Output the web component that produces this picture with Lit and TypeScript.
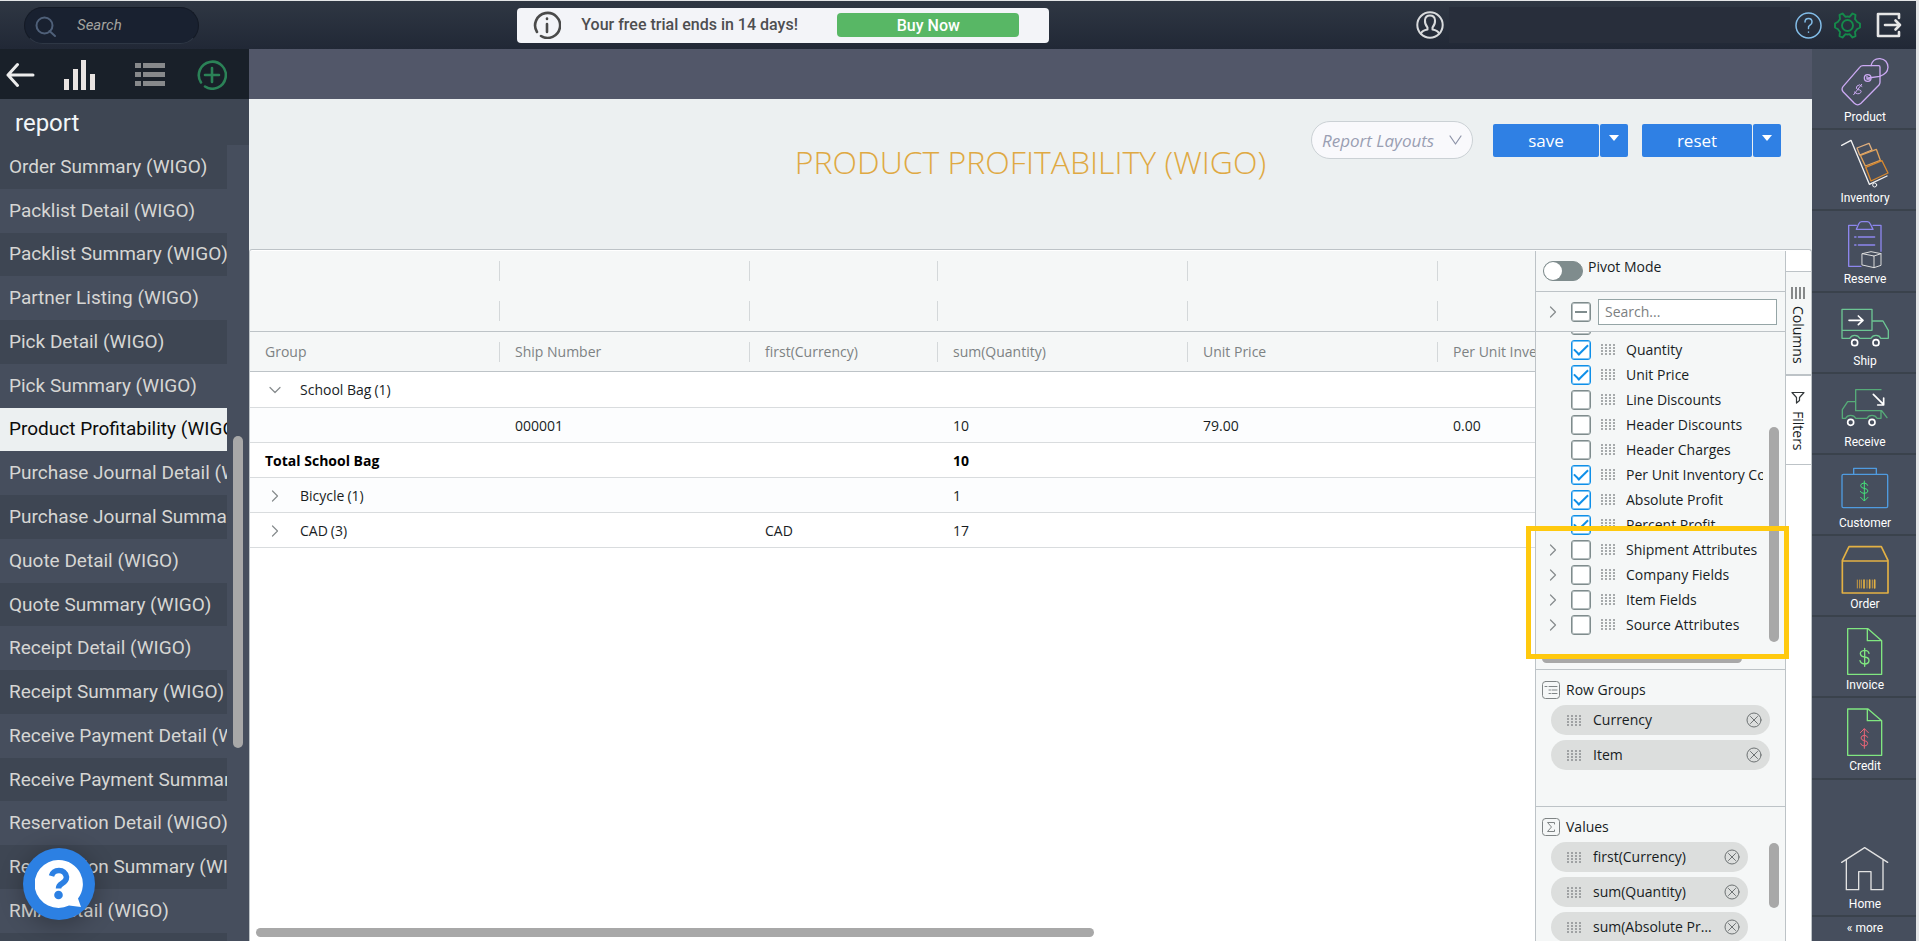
import { LitElement, html, css, svg, nothing, type TemplateResult } from "lit";
import { customElement } from "lit/decorators.js";
import { classMap } from "lit/directives/class-map.js";

const reports = [
  "Order Summary (WIGO)",
  "Packlist Detail (WIGO)",
  "Packlist Summary (WIGO)",
  "Partner Listing (WIGO)",
  "Pick Detail (WIGO)",
  "Pick Summary (WIGO)",
  "Product Profitability (WIGO)",
  "Purchase Journal Detail (WIGO)",
  "Purchase Journal Summary (WIGO)",
  "Quote Detail (WIGO)",
  "Quote Summary (WIGO)",
  "Receipt Detail (WIGO)",
  "Receipt Summary (WIGO)",
  "Receive Payment Detail (WIGO)",
  "Receive Payment Summary (WIGO)",
  "Reservation Detail (WIGO)",
  "Reservation Summary (WIGO)",
  "RMA Detail (WIGO)",
  "RMA Summary (WIGO)",
];
const activeReport = "Product Profitability (WIGO)";

const headers = ["Group", "Ship Number", "first(Currency)", "sum(Quantity)", "Unit Price", "Per Unit Inventory Cost"];

interface Row {
  group?: string;
  count?: number;
  open?: boolean;
  total?: boolean;
  cells: string[];
}
const rows: Row[] = [
  { group: "School Bag", count: 1, open: true, cells: ["", "", "", "", ""] },
  { cells: ["000001", "", "10", "79.00", "0.00"] },
  { group: "Total School Bag", total: true, cells: ["", "", "10", "", ""] },
  { group: "Bicycle", count: 1, cells: ["", "", "1", "", ""] },
  { group: "CAD", count: 3, cells: ["", "CAD", "17", "", ""] },
];

interface Field {
  name: string;
  on?: boolean;
  group?: boolean;
}
const fields: Field[] = [
  { name: "Sales Person" },
  { name: "Quantity", on: true },
  { name: "Unit Price", on: true },
  { name: "Line Discounts" },
  { name: "Header Discounts" },
  { name: "Header Charges" },
  { name: "Per Unit Inventory Cost", on: true },
  { name: "Absolute Profit", on: true },
  { name: "Percent Profit", on: true },
  { name: "Shipment Attributes", group: true },
  { name: "Company Fields", group: true },
  { name: "Item Fields", group: true },
  { name: "Source Attributes", group: true },
];

const chevron = (open = false) => html`<svg class="chev" width="12" height="12" viewBox="0 0 12 12" fill="none" stroke="#868b8d" stroke-width="1.2">
  ${open ? svg`<path d="M1 3.5l5 5 5-5"/>` : svg`<path d="M3.5 1l5 5-5 5"/>`}
</svg>`;

const grip = html`<svg class="grip" width="14" height="11" viewBox="0 0 14 11" stroke="#85898b" stroke-width="1.4" stroke-dasharray="2 1">
  <path d="M1 0v11M5 0v11M9 0v11M13 0v11"/>
</svg>`;

const removeIcon = html`<svg width="16" height="16" viewBox="0 0 16 16" fill="none" stroke="#6d7273" stroke-width="1">
  <circle cx="8" cy="8" r="7"/><path d="M4.5 4.5l7 7M11.5 4.5l-7 7"/>
</svg>`;

interface NavItem {
  label: string;
  box: string;
  art: TemplateResult;
}
const nav: NavItem[] = [
  {
    label: "Product",
    box: "124 21 144 150",
    art: svg`<g stroke="#cba9f2" stroke-width="4">
      <path d="M190 47L237 47Q241 47 241 52L241 97Q241 101 238 105L184 160Q174 169 164 160L131 126Q124 118 130 110L180 52Q184 47 190 47Z"/>
      <circle cx="204" cy="84" r="10"/><path d="M202 79v8h8"/><path d="M214 47Q219 25 241 26Q264 29 265 52Q264 72 240 79L206 84"/>
      <path d="M187 109Q180 100 172 108Q166 116 175 119Q188 120 183 128Q175 136 164 126M186 103l-24 31" stroke-width="3"/></g>`,
  },
  {
    label: "Inventory",
    box: "124 264 144 150",
    art: svg`<path d="M126 286L154 271L209 403L262 378" stroke="#f2f2f2" stroke-width="4"/>
      <circle cx="225" cy="405" r="6" stroke="#f2f2f2" stroke-width="3"/>
      <path d="M172 294L208 280L217 300L180 315Z" stroke="#dfae7d" stroke-width="4"/>
      <path d="M182 316L230 298L242 331L197 348Z" stroke="#e0a25a" stroke-width="4"/>
      <path d="M198 352L247 332L265 369L214 393Z" stroke="#d8892f" stroke-width="4"/>`,
  },
  {
    label: "Reserve",
    box: "124 507 144 150",
    art: svg`<path d="M184 649H147V526H170M220 526H244V604M170 538L177 522Q180 515 186 515H203Q209 515 212 522L220 538Z" stroke="#8d86ee" stroke-width="4"/>
      <path d="M176 561H225M176 585H225M165 561h4M165 585h4" stroke="#8d86ee" stroke-width="4"/>
      <path d="M188 611L214 605L244 611V646L223 653L188 645ZM188 611L223 618V653M223 618L244 611" stroke="#dcdcdc" stroke-width="3"/>`,
  },
  {
    label: "Ship",
    box: "124 750 144 150",
    art: svg`<path d="M150 862H127V775H217V838H127M217 810H250L266 838V862H243M214 862H180M150 862Q155 853 165 853Q176 853 180 862M214 862Q218 853 229 853Q240 853 243 862" stroke="#6cc593" stroke-width="4"/>
      <circle cx="165" cy="875" r="9" stroke="#fff" stroke-width="5"/><circle cx="229" cy="875" r="9" stroke="#fff" stroke-width="5"/>
      <path d="M148 808H190M176 795L190 808L176 821" stroke="#fff" stroke-width="5"/>`,
  },
  {
    label: "Receive",
    box: "124 66 144 150",
    art: svg`<path d="M244 89H168V152H246L262 173M168 125H144L128 149V175H138Q142 166 153 166Q164 166 168 175H202Q206 166 217 166Q228 166 232 175H244V152" stroke="#56ab78" stroke-width="4"/>
      <circle cx="153" cy="187" r="9" stroke="#fff" stroke-width="5"/><circle cx="217" cy="187" r="9" stroke="#fff" stroke-width="5"/>
      <path d="M221 103L252 134M234 135H252V114" stroke="#fff" stroke-width="5"/>`,
  },
  {
    label: "Customer",
    box: "124 309 144 150",
    art: svg`<rect x="127" y="343" width="137" height="100" rx="4" stroke="#4f9be0" stroke-width="4"/>
      <path d="M162 342V325H230V342" stroke="#4f9be0" stroke-width="4"/>
      <path d="M204 376Q202 369 193 369Q183 370 183 377Q184 384 193 385Q204 386 205 393Q204 400 193 400Q184 400 182 394M194 363V422M183 412L194 423L205 412" stroke="#45e07a" stroke-width="3"/>`,
  },
  {
    label: "Order",
    box: "124 552 144 150",
    art: svg`<path d="M128 601L148 560H245L265 601V699H128ZM128 603H265" stroke="#e3b144" stroke-width="5"/>
      <path d="M173 660V684M180 660V684M185 660V684M202 660V684M218 660V684" stroke="#c79a42" stroke-width="3"/>
      <path d="M193 660V684M210 660V684M225 660V684" stroke="#e3b144" stroke-width="5"/>`,
  },
  {
    label: "Invoice",
    box: "124 795 144 150",
    art: svg`<path d="M144 806H205L246 842V943H144ZM203 806V842H246" stroke="#80e780" stroke-width="4"/>
      <path d="M208 880Q206 871 195 871Q182 872 182 881Q183 890 195 891Q208 892 208 902Q207 912 195 912Q183 911 181 902M195 865V919" stroke="#80e780" stroke-width="4"/>`,
  },
  {
    label: "Credit",
    box: "124 110 144 150",
    art: svg`<path d="M144 119H205L246 154V258H144ZM203 119V154H246" stroke="#80e780" stroke-width="4"/>
      <path d="M204 204Q202 198 194 198Q184 199 184 206Q185 213 194 214Q204 215 204 222Q203 230 194 230Q184 229 183 223M194 179V237M182 190L194 178L206 190" stroke="#ec6577" stroke-width="3"/>`,
  },
];
const homeItem: NavItem = {
  label: "Home",
  box: "124 525 144 150",
  art: svg`<path d="M126 580L195 536L264 580M140 572V662H177V608H214V662H250V572" stroke="#e2e2e2" stroke-width="4"/>`,
};

@customElement("app-root")
export class AppRoot extends LitElement {
  static styles = css`
    :host {
      display: flex;
      flex-direction: column;
      height: 100vh;
      box-sizing: border-box;
      padding: 1px 3px 0 0;
      background: #e4e6e7;
      overflow: hidden;
      font-family: "Open Sans", "Noto Sans", sans-serif;
      font-size: 14px;
      line-height: 20px;
      color: #181d1f;
    }
    * { box-sizing: border-box; }
    button, input, select { font: inherit; color: inherit; margin: 0; padding: 0; border: 0; background: none; }
    button { cursor: pointer; }
    svg { display: block; flex: none; }
    svg[fill="none"] { stroke-linecap: round; stroke-linejoin: round; }

    .top {
      flex: none;
      height: 48px;
      display: grid;
      grid-template-columns: 27% 532px 1fr;
      align-items: center;
      background: linear-gradient(#2f3743, #212836);
      font-family: Roboto, sans-serif;
    }
    .find {
      display: flex;
      align-items: center;
      width: 175px;
      height: 37px;
      margin-left: 24px;
      padding-left: 10px;
      border-radius: 19px;
      background: #192130;
      border: 1px solid #141a25;
      border-bottom-color: #2e3745;
      gap: 20px;
    }
    .find input { width: 100px; min-width: 0; font-style: italic; font-size: 15px; outline: none; }
    .find input::placeholder { color: #a3a39f; opacity: 1; }
    .find svg { margin-top: 4px; }
    .trial {
      display: flex;
      align-items: center;
      height: 35px;
      border-radius: 4px;
      background: #f3f4f8;
      color: #4e4e50;
      font-size: 16px;
      font-weight: 500;
      padding: 0 30px 0 16px;
    }
    .trial p { margin: 0 auto 0 20px; }
    .trial button { width: 182px; height: 24px; border-radius: 4px; background: #58b765; color: #fff; padding-top: 2px; }
    .account { display: flex; align-items: center; justify-content: flex-end; padding-right: 14px; }
    .who { flex: 0 1 341px; height: 36px; margin: 0 5px; background: #282e3b; }
    .account a + a { margin-left: 12px; }
    .account a:last-child { margin-left: 15px; }

    .body { flex: 1; min-height: 0; display: flex; }

    .side { flex: none; width: 249px; display: flex; flex-direction: column; background: #464e5d; font-family: Roboto, sans-serif; position: relative; }
    .tools { flex: none; height: 50px; display: grid; grid-template-columns: 58px 71px 62px auto; justify-items: start; align-items: center; padding: 2px 0 0 6px; background: #192029; }
    .side h2 { flex: none; margin: 0; height: 46px; padding-left: 15px; background: #3e4653; color: #f2f6f8; font-size: 24px; line-height: 48px; font-weight: 400; }
    .scroller { flex: 1; min-height: 0; display: flex; }
    .reports { flex: 1; height: 100%; margin: 0; padding: 0; list-style: none; display: flex; flex-direction: column; overflow: hidden; }
    .reports li { flex: 0 0 5.5%; display: flex; overflow: hidden; }
    .reports li:nth-child(odd) { background: #3e4653; }
    .reports a { flex: 1; display: flex; align-items: center; padding-left: 9px; font-size: 19px; color: #d6d6d4; text-decoration: none; white-space: nowrap; }
    .reports li.active { background: #ecf0f1; }
    .reports li.active a { color: #0b0b0b; }
    .track { flex: none; width: 22px; display: flex; flex-direction: column; align-items: center; }
    .track::before { content: ""; flex: 291 1 0; }
    .track::after { content: ""; flex: 193 1 0; }
    .thumb { background: #a8a8a8; border-radius: 5px; width: 10px; flex: 312 1 0; }
    .chat { position: absolute; left: 23px; bottom: 21px; width: 72px; height: 72px; border-radius: 50%; background: #2c80e3; box-shadow: 0 4px 24px rgba(0, 0, 0, 0.3); display: grid; place-items: center; }

    .main { flex: 1; min-width: 0; display: flex; flex-direction: column; background: #ecf0f1; }
    .band { flex: none; height: 50px; background: #525769; }
    .heading { flex: none; height: 150px; display: grid; grid-template-columns: 1fr auto 1fr; align-items: start; }
    .heading h1 { grid-column: 2; margin: 36px 0 0; font-size: 32px; line-height: 54px; font-weight: 300; color: #dfa943; }
    .actions { display: flex; justify-content: flex-end; align-items: center; padding: 22px 31px 0 0; font-size: 17px; }
    .layouts { position: relative; margin-right: 20px; }
    .layouts select { appearance: none; width: 162px; height: 38px; border: 1px solid #cbd1d5; border-radius: 19px; padding: 2px 0 0 10px; background: #f9f9fc; color: #9a9fb3; font-style: italic; }
    .layouts svg { position: absolute; right: 11px; top: 13px; pointer-events: none; }
    .split { display: flex; gap: 1px; margin-right: 14px; }
    .split:last-child { margin-right: 0; }
    .split button { height: 33px; width: 106px; padding-top: 2px; background: #2f80e4; color: #fff; border-radius: 2px; display: grid; place-items: center; }
    .split .wide { width: 110px; }
    .split .drop { width: 28px; padding: 0 0 4px; }

    .grid { flex: 1; min-height: 0; display: flex; background: #fff; border: 1px solid #bdc3c7; border-bottom: 0; border-radius: 3px 3px 0 0; padding-top: 1px; }
    .sheet { flex: 1; min-width: 0; display: flex; flex-direction: column; justify-content: space-between; overflow: hidden; }
    table { table-layout: fixed; width: 1438px; border-collapse: separate; border-spacing: 0; }
    thead { background: #f5f7f7; }
    thead th { height: 40px; padding: 0; text-align: left; font-weight: 400; color: #7d8283; }
    thead span { display: block; height: 20px; padding-left: 15px; border-right: 1px solid #d4d8da; white-space: nowrap; overflow: hidden; }
    thead .line th { border-bottom: 1px solid #bdc3c7; }
    thead .tall th { height: 41px; }
    tbody td { height: 35px; padding: 1px 0 0 15px; border-bottom: 1px solid #d9dcde; white-space: nowrap; }
    tbody tr:first-child td { height: 36px; }
    tbody tr:nth-child(even) td { background: #fcfdfe; }
    tbody .total td { font-weight: 700; color: #000; }
    .group { display: flex; align-items: center; padding-left: 4px; gap: 3px; }
    .group .chev { margin-right: 16px; }
    .hbar { flex: none; display: flex; padding: 0 6px 4px; }
    .hbar i { width: 65.8%; height: 9px; border-radius: 5px; background: #a8a8a8; }

    .panel { position: relative; flex: none; width: 251px; display: flex; flex-direction: column; background: #f5f7f7; border: solid #bdc3c7; border-width: 0 1px; }
    .pivot { flex: none; height: 41px; display: flex; gap: 5px; padding: 6px 0 0 7px; border-bottom: 1px solid #bdc3c7; }
    .pivot input { appearance: none; width: 40px; height: 20px; margin-top: 4px; border-radius: 10px; background: #7f8c8d; border: 1px solid #7f8c8d; }
    .pivot input::before { content: ""; display: block; width: 18px; height: 18px; border-radius: 50%; background: #fff; }
    .filter { flex: none; height: 40px; display: flex; align-items: center; padding: 0 8px 0 11px; border-bottom: 1px solid #bdc3c7; }
    .filter .text { flex: 1; min-width: 0; height: 26px; margin-left: 7px; padding-left: 6px; border: 1px solid #95a5a6; background: #fff; outline: none; }
    .filter .text::placeholder { color: #7c8081; opacity: 1; }
    .box { appearance: none; flex: none; display: grid; place-items: center; width: 20px; height: 20px; border: 1px solid #7f8c8d; box-shadow: inset 0 0 0 1px #b5bdbe; border-radius: 3px; background: #fff; }
    .box:checked { border-color: #0f8fe8; box-shadow: inset 0 0 0 1px #7cc3f3; }
    .box:checked::before { content: ""; width: 12px; height: 6px; border: solid #0f8fe8; border-width: 0 0 2px 2px; transform: translateY(-2px) rotate(-45deg); }
    .box.some::before { content: ""; width: 12px; height: 2px; background: #7f8c8d; }
    .filter .box, .fields .box { margin-left: 12px; }
    .chooser { flex: none; height: 338px; display: flex; flex-direction: column; border-bottom: 1px solid #bdc3c7; }
    .chooser .view { flex: 1; min-height: 0; display: flex; overflow: hidden; }
    .fields { flex: 1; min-width: 0; margin: -20px 0 0; padding: 0 0 0 11px; list-style: none; overflow: hidden; }
    .fields li { display: flex; align-items: center; height: 25px; white-space: nowrap; }
    .fields label { flex: 1; display: flex; align-items: center; min-width: 0; overflow: hidden; }
    .fields .chev.off { visibility: hidden; }
    .fields .grip { margin: 0 11px 0 10px; }
    .vtrack { flex: none; width: 22px; display: flex; justify-content: center; }
    .vtrack i { width: 10px; height: 215px; margin-top: 95px; border-radius: 5px; background: #a8a8a8; }
    .chooser .low { flex: none; width: 200px; height: 9px; margin: 0 0 6px 6px; border-radius: 5px; background: #a8a8a8; }
    .zone { flex: none; height: 137px; border-bottom: 1px solid #bdc3c7; padding: 11px 6px 0; }
    .zone.last { flex: 1; min-height: 0; border-bottom: 0; overflow: hidden; }
    .zone h3 { display: flex; align-items: center; gap: 6px; margin: 0; height: 18px; font-size: 14px; line-height: 22px; font-weight: 400; }
    .drops { display: flex; margin-top: 6px; }
    .pills { flex: 1; min-width: 0; margin: 0; padding: 0 9px; list-style: none; display: grid; grid-template-columns: minmax(0, 1fr); gap: 5px; }
    .pills li { display: flex; align-items: center; height: 30px; padding: 0 8px 0 16px; border-radius: 15px; background: #dcdedd; }
    .pills span { flex: 1; min-width: 0; margin: 0 12px; overflow: hidden; white-space: nowrap; text-overflow: ellipsis; }
    .drops .vtrack { justify-content: flex-end; }
    .drops .vtrack i { height: 65px; margin-top: 1px; }

    .tabs { flex: none; width: 25px; display: flex; flex-direction: column; padding-top: 20px; }
    .tabs button { writing-mode: vertical-rl; display: flex; align-items: center; gap: 7px; height: 89px; padding: 15px 1px 0 0; border-bottom: 1px solid #bdc3c7; }
    .tabs .on { height: 105px; border-top: 1px solid #bdc3c7; border-bottom-width: 2px; background: #f5f7f7; }

    .mark { position: absolute; left: -10px; top: 275px; width: 263px; height: 133px; border: 5px solid #ffc90e; pointer-events: none; }

    .dock { flex: none; width: 104px; display: flex; flex-direction: column; background: #464e5d; font-family: Roboto, sans-serif; }
    .dock a { flex: 0 0 9.1%; display: flex; flex-direction: column; align-items: center; padding: 8px 0 0 2px; border-bottom: 2px solid #3a424c; color: #fff; text-decoration: none; font-size: 12px; line-height: 21px; }
    .dock .home { margin-top: auto; }
    .dock .more { flex: 0 0 24px; padding: 1px 0 0 2px; border: 0; }
  `;

  private navLink(item: NavItem, home = false) {
    return html`<a href="#" class=${classMap({ home })}>
      <svg width="48" height="50" viewBox=${item.box} fill="none">${item.art}</svg>${item.label}
    </a>`;
  }

  private pill(name: string) {
    return html`<li>${grip}<span>${name}</span><button aria-label="Remove ${name}">${removeIcon}</button></li>`;
  }

  private row(r: Row) {
    const first = r.count
      ? html`<div class="group">${chevron(r.open)}<span>${r.group}</span><span>(${r.count})</span></div>`
      : r.group ?? nothing;
    return html`<tr class=${classMap({ total: !!r.total })}>
      <td>${first}</td>
      ${r.cells.map((c) => html`<td>${c}</td>`)}
    </tr>`;
  }

  private dropArrow = html`<svg width="10" height="6" viewBox="0 0 10 6"><path d="M0 0h10L5 6z" fill="#fff"/></svg>`;

  render() {
    return html`
      <header class="top">
        <label class="find">
          <svg width="22" height="22" viewBox="0 0 22 22" fill="none" stroke="#4f6079" stroke-width="2">
            <circle cx="9.5" cy="9.5" r="8"/><path d="M14.5 15l5.5 5"/>
          </svg>
          <input type="search" placeholder="Search" aria-label="Search" />
        </label>
        <div class="trial">
          <svg width="28" height="28" viewBox="0 0 28 28" fill="none" stroke="#4a4a4a" stroke-width="2.6">
            <path d="M4 21A12.5 12.5 0 1 1 8 25"/><path d="M14 13v8M14 7.5v.5"/>
          </svg>
          <p>Your free trial ends in 14 days!</p>
          <button>Buy Now</button>
        </div>
        <div class="account">
          <svg width="28" height="28" viewBox="0 0 28 28" fill="none" stroke="#d9dbdd" stroke-width="2">
            <circle cx="14" cy="14" r="12.7"/>
            <path d="M5 22.5Q6 19.500 11.500 18.500V16.500Q8.500 13 9 9Q9.500 4.500 14 4.500T19 9Q19.500 13 16.500 16.500V18.500Q22 19.500 23 22.500"/>
          </svg>
          <div class="who"></div>
          <a href="#" aria-label="Help">
            <svg width="27" height="27" viewBox="0 0 27 27" fill="none" stroke="#82bde8" stroke-width="1.5">
              <circle cx="13.5" cy="13.5" r="12.5"/>
              <path d="M10 10Q10 6.500 13.500 6.500T17 10Q17 12 15 13.200T13.500 16.500M13.500 20v.3"/>
            </svg>
          </a>
          <a href="#" aria-label="Settings">
            <svg width="27" height="27" viewBox="0 0 27 27" fill="none" stroke="#158a4b" stroke-width="1.9">
              <circle cx="13.5" cy="13.5" r="5.5"/>
              <path d="M8.500 1.500L11.500 4.800Q13.500 4.200 15.500 4.800L18.500 1.500L21.500 2.900L21 7.200Q22.300 8.500 22.900 9.700L26 11.500V15.500L22.900 17.300Q22.300 18.500 21 19.800L21.500 24.100L18.500 25.500L15.500 22.200Q13.500 22.800 11.500 22.200L8.500 25.500L5.500 24.100L6 19.800Q4.700 18.500 4.100 17.300L1 15.500V11.500L4.100 9.700Q4.700 8.500 6 7.200L5.500 2.900Z"/>
            </svg>
          </a>
          <a href="#" aria-label="Log out">
            <svg width="26" height="26" viewBox="0 0 26 26" fill="none" stroke="#e6e6e6" stroke-width="2.6">
              <path d="M23 6V2H2V24H23V20M9 13H24M19.500 8.500L24 13L19.500 17.500"/>
            </svg>
          </a>
        </div>
      </header>
      <div class="body">
        <nav class="side" aria-label="Reports">
          <div class="tools">
            <button aria-label="Back">
              <svg width="29" height="26" viewBox="0 0 29 26" fill="none" stroke="#ececec" stroke-width="3"><path d="M2 13H27M11.500 2.500L2 13L11.500 23.500"/></svg>
            </button>
            <button aria-label="Charts">
              <svg width="32" height="30" viewBox="0 0 32 30" fill="#e9e4e1"><path d="M0 19h5v11H0zM9 9h5v21H9zM17 0h5v30h-5zM26 14h5v16h-5z"/></svg>
            </button>
            <button aria-label="List">
              <svg width="30" height="24" viewBox="0 0 30 24" fill="#87898b"><path d="M0 0h6v5H0zM8 0h22v5H8zM0 9h6v5H0zM8 9h22v5H8zM0 18h6v5H0zM8 18h22v5H8z"/></svg>
            </button>
            <button aria-label="Add report">
              <svg width="30" height="30" viewBox="0 0 30 30" fill="none" stroke="#2b8257" stroke-width="2.6"><path d="M4 22.500A13.500 13.500 0 1 1 8 26.500M15 8v14M8 15h14"/></svg>
            </button>
          </div>
          <h2>report</h2>
          <div class="scroller">
            <ul class="reports">
              ${reports.map((r) => html`<li class=${classMap({ active: r === activeReport })}><a href="#">${r}</a></li>`)}
            </ul>
            <div class="track"><i class="thumb"></i></div>
          </div>
          <button class="chat" aria-label="Support chat">
            <svg width="48" height="48" viewBox="0 0 48 48">
              <path d="M24 0a24 24 0 1 0 10 45.600L46 47L43 38.500A24 24 0 0 0 24 0z" fill="#fff"/>
              <path d="M16.500 16Q18 10.500 24 10.500T31.500 17Q31.500 21 27 23.500Q23.500 25.500 23.500 28.500" fill="none" stroke="#2c80e3" stroke-width="5.5"/>
              <circle cx="23.5" cy="35" r="4.3" fill="#2c80e3"/>
            </svg>
          </button>
        </nav>
        <main class="main">
          <div class="band"></div>
          <div class="heading">
            <h1>PRODUCT PROFITABILITY (WIGO)</h1>
            <div class="actions">
              <div class="layouts">
                <select aria-label="Report Layouts"><option>Report Layouts</option></select>
                <svg width="13" height="12" viewBox="0 0 13 12" fill="none" stroke="#8d93a8" stroke-width="1.2"><path d="M1 2l5.500 8L12 2"/></svg>
              </div>
              <div class="split"><button>save</button><button class="drop" aria-label="Save options">${this.dropArrow}</button></div>
              <div class="split"><button class="wide">reset</button><button class="drop" aria-label="Reset options">${this.dropArrow}</button></div>
            </div>
          </div>
          <div class="grid">
            <div class="sheet">
              <table>
                <colgroup>
                  <col width="250" /><col width="250" /><col width="188" /><col width="250" /><col width="250" /><col width="250" />
                </colgroup>
                <thead>
                  <tr>${headers.map(() => html`<th><span></span></th>`)}</tr>
                  <tr class="line tall">${headers.map(() => html`<th><span></span></th>`)}</tr>
                  <tr class="line">${headers.map((h) => html`<th scope="col"><span>${h}</span></th>`)}</tr>
                </thead>
                <tbody>${rows.map((r) => this.row(r))}</tbody>
              </table>
              <div class="hbar"><i></i></div>
            </div>
            <aside class="panel">
              <label class="pivot"><input type="checkbox" role="switch" />Pivot Mode</label>
              <div class="filter">
                ${chevron()}
                <input class="box some" type="checkbox" aria-label="Toggle all columns" />
                <input class="text" type="text" placeholder="Search..." aria-label="Filter columns" />
              </div>
              <div class="chooser">
                <div class="view">
                  <ul class="fields">
                    ${fields.map(
                      (f) => html`<li>
                        <svg class="chev ${f.group ? "" : "off"}" width="12" height="12" viewBox="0 0 12 12" fill="none" stroke="#868b8d" stroke-width="1.2"><path d="M3.500 1l5 5-5 5"/></svg>
                        <label><input class="box" type="checkbox" ?checked=${!!f.on} />${grip}${f.name}</label>
                      </li>`
                    )}
                  </ul>
                  <div class="vtrack"><i></i></div>
                </div>
                <i class="low"></i>
              </div>
              <section class="zone">
                <h3>
                  <svg width="18" height="18" viewBox="0 0 18 18" fill="none" stroke="#7f8485" stroke-width="1"><rect x=".5" y=".5" width="17" height="17" rx="3"/><path d="M3 5.500h2M7 5.500h8M7 9h1.500M10 9h5M7 12.500h1.500M10 12.500h5"/></svg>
                  Row Groups
                </h3>
                <div class="drops"><ul class="pills">${["Currency", "Item"].map((p) => this.pill(p))}</ul></div>
              </section>
              <section class="zone last">
                <h3>
                  <svg width="18" height="18" viewBox="0 0 18 18" fill="none" stroke="#7f8485" stroke-width="1"><rect x=".5" y=".5" width="17" height="17" rx="3"/><path d="M12.500 6V4.500H5.500L9.500 9L5.500 13.500H12.500V12"/></svg>
                  Values
                </h3>
                <div class="drops">
                  <ul class="pills">${["first(Currency)", "sum(Quantity)", "sum(Absolute Profit)"].map((p) => this.pill(p))}</ul>
                  <div class="vtrack"><i></i></div>
                </div>
              </section>
              <div class="mark"></div>
            </aside>
            <div class="tabs">
              <button class="on"><svg width="14" height="12" viewBox="0 0 14 12" stroke="#4b4f50" stroke-width="1.3"><path d="M1 0v12M5 0v12M9 0v12M13 0v12"/></svg>Columns</button>
              <button><svg width="14" height="13" viewBox="0 0 14 13" fill="none" stroke="#33383a" stroke-width="1.2"><path d="M1 1.500H13L8.500 6.500V9.500L5.500 12V6.500Z"/></svg>Filters</button>
            </div>
          </div>
        </main>
        <nav class="dock" aria-label="Modules">
          ${nav.map((n) => this.navLink(n))}
          ${this.navLink(homeItem, true)}
          <a class="more" href="#">« more</a>
        </nav>
      </div>
    `;
  }
}
